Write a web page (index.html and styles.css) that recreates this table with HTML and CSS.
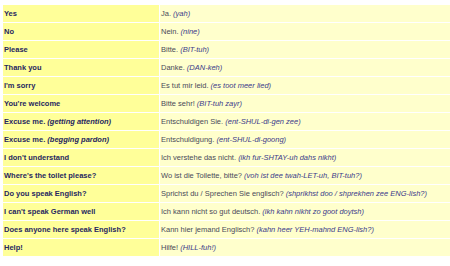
FILE: index.html
```html
<!DOCTYPE html>
<html>
<head>
<meta charset="utf-8">
<link rel="stylesheet" href="styles.css">
</head>
<body>
<table class="phrases">
<tr><td class="en">Yes</td><td class="de">Ja. <i>(yah)</i></td></tr>
<tr><td class="en">No</td><td class="de">Nein. <i>(nine)</i></td></tr>
<tr><td class="en">Please</td><td class="de">Bitte. <i>(BIT-tuh)</i></td></tr>
<tr><td class="en">Thank you</td><td class="de">Danke. <i>(DAN-keh)</i></td></tr>
<tr><td class="en">I'm sorry</td><td class="de">Es tut mir leid. <i>(es toot meer lied)</i></td></tr>
<tr><td class="en">You're welcome</td><td class="de">Bitte sehr! <i>(BIT-tuh zayr)</i></td></tr>
<tr><td class="en">Excuse me. <i>(getting attention)</i></td><td class="de">Entschuldigen Sie. <i>(ent-SHUL-di-gen zee)</i></td></tr>
<tr><td class="en">Excuse me. <i>(begging pardon)</i></td><td class="de">Entschuldigung. <i>(ent-SHUL-di-goong)</i></td></tr>
<tr><td class="en">I don't understand</td><td class="de">Ich verstehe das nicht. <i>(ikh fur-SHTAY-uh dahs nikht)</i></td></tr>
<tr><td class="en">Where's the toilet please?</td><td class="de">Wo ist die Toilette, bitte? <i>(voh ist dee twah-LET-uh, BIT-tuh?)</i></td></tr>
<tr><td class="en">Do you speak English?</td><td class="de">Sprichst du / Sprechen Sie englisch? <i>(shprikhst doo / shprekhen zee ENG-lish?)</i></td></tr>
<tr><td class="en">I can't speak German well</td><td class="de">Ich kann nicht so gut deutsch. <i>(ikh kahn nikht zo goot doytsh)</i></td></tr>
<tr><td class="en">Does anyone here speak English?</td><td class="de">Kann hier jemand Englisch? <i>(kahn heer YEH-mahnd ENG-lish?)</i></td></tr>
<tr><td class="en">Help!</td><td class="de">Hilfe! <i>(HILL-fuh!)</i></td></tr>
</table>
</body>
</html>
```
FILE: styles.css
```css
html, body {
  margin: 0;
  padding: 0;
  background: #ffffff;
}
body {
  padding: 4px 0 0 2px;
  font-family: "Liberation Sans", Arial, sans-serif;
}
.phrases {
  border-collapse: separate;
  border-spacing: 1px 1.15px;
  width: 460px;
  table-layout: fixed;
}
.phrases td {
  height: 17px;
  padding: 0 1px;
  vertical-align: middle;
  font-size: 7.5px;
  line-height: 9px;
  white-space: nowrap;
  overflow: hidden;
}
.en {
  width: 154px;
  background: #ffff99;
  color: #26265f;
  font-weight: bold;
}
.de {
  background: #ffffcc;
  color: #4a4a5a;
}
.de i {
  color: #3a3a8a;
}
```
